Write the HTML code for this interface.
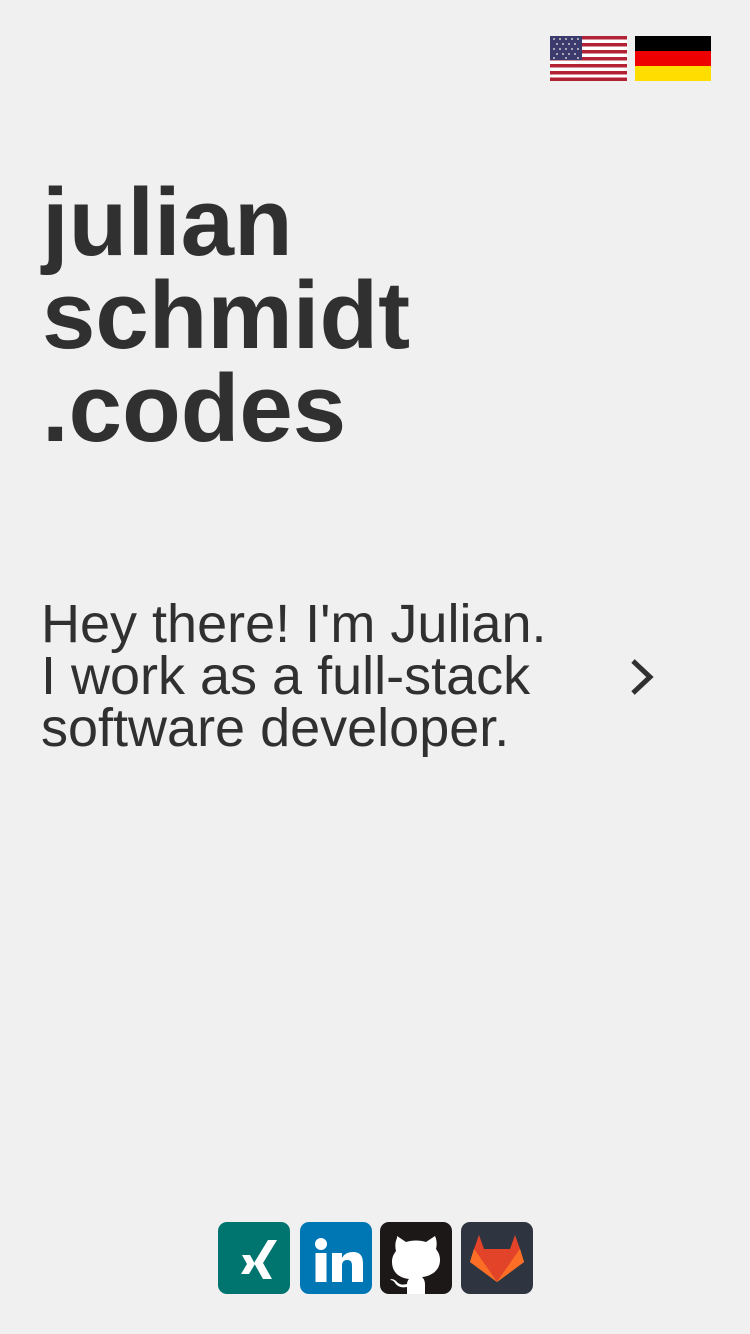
<!DOCTYPE html>
<html><head><meta charset="utf-8"><style>
body{margin:0;width:750px;height:1334px;background:#f0f0f0;position:relative;overflow:hidden;font-family:"Liberation Sans",sans-serif;color:#303030}
.t{position:absolute;left:42px;top:176px;font-weight:bold;font-size:96px;line-height:93px}
.b{position:absolute;left:41px;top:598px;font-size:54px;line-height:52px;white-space:nowrap}
.ic{position:absolute;top:1222px;width:72px;height:72px;border-radius:9px;overflow:hidden}
</style></head><body>
<svg style="position:absolute;left:550px;top:36px" width="77" height="45" viewBox="0 0 77 45">
<rect width="77" height="45" fill="#fff"/>
<g fill="#b22234"><rect y="0" width="77" height="3.5"/><rect y="7" width="77" height="3.5"/><rect y="14" width="77" height="3.5"/><rect y="21" width="77" height="3.5"/><rect y="28" width="77" height="3.5"/><rect y="35" width="77" height="3.5"/><rect y="41.5" width="77" height="3.5"/></g>
<rect width="32" height="24" fill="#3c3b6e"/>
<g fill="#ccc"><circle cx="4" cy="3" r="1"/><circle cx="10" cy="3" r="1"/><circle cx="16" cy="3" r="1"/><circle cx="22" cy="3" r="1"/><circle cx="28" cy="3" r="1"/><circle cx="7" cy="8" r="1"/><circle cx="13" cy="8" r="1"/><circle cx="19" cy="8" r="1"/><circle cx="25" cy="8" r="1"/><circle cx="4" cy="13" r="1"/><circle cx="10" cy="13" r="1"/><circle cx="16" cy="13" r="1"/><circle cx="22" cy="13" r="1"/><circle cx="28" cy="13" r="1"/><circle cx="7" cy="18" r="1"/><circle cx="13" cy="18" r="1"/><circle cx="19" cy="18" r="1"/><circle cx="25" cy="18" r="1"/><circle cx="4" cy="22" r="1"/><circle cx="16" cy="22" r="1"/><circle cx="28" cy="22" r="1"/></g>
</svg>
<svg style="position:absolute;left:635px;top:36px" width="76" height="45"><rect width="76" height="15" fill="#000"/><rect y="15" width="76" height="15" fill="#e00"/><rect y="30" width="76" height="15" fill="#fd0"/></svg>
<div class="t">julian<br>schmidt<br>.codes</div>
<div class="b">Hey there! I'm Julian.<br>I work as a full-stack<br>software developer.</div>
<svg style="position:absolute;left:626px;top:656px" width="32" height="42"><path d="M7 5 L24 21 L7 37" fill="none" stroke="#303030" stroke-width="5"/></svg>
<svg class="ic" style="left:218px" viewBox="0 0 72 72"><rect width="72" height="72" fill="#007570"/><path d="M24 33h8l5 9-6 10h-8l6-10z" fill="#fff"/><path d="M50 18h9L45 41l9 16h-9l-9-16z" fill="#fff"/></svg>
<svg class="ic" style="left:300px" viewBox="0 0 72 72"><rect width="72" height="72" fill="#0077b5"/><circle cx="21" cy="22" r="6" fill="#fff"/><rect x="15.5" y="31" width="11" height="29" fill="#fff"/><path d="M32 31h10v5c2-4 6-6 11-6 8 0 10 5 10 12v18H52V44c0-4-1-6-5-6s-5 3-5 6v16H32z" fill="#fff"/></svg>
<svg class="ic" style="left:380px" viewBox="0 0 72 72"><rect width="72" height="72" fill="#1b1817"/><path d="M17 14l9 6c6-2 14-2 20 0l9-6c2 4 2 9 1 13 3 4 4 7 4 11 0 10-8 16-18 17 2 2 3 4 3 8v9H27v-7c-5 1-9 0-12-4-1-2-3-3-5-3 2-2 5 0 7 2 3 3 6 3 10 2 0-2 1-4 2-5-10-1-17-7-17-17 0-4 1-7 4-11-1-4-1-9 1-13z" fill="#fff"/></svg>
<svg class="ic" style="left:461px" viewBox="0 0 72 72"><rect width="72" height="72" fill="#2e3440"/><path d="M36 60L9 40l4-13 10 0z" fill="#fca326"/><path d="M36 60L63 40l-4-13-10 0z" fill="#fca326"/><path d="M36 60L13 27 18 13l5 14z" fill="#e24329"/><path d="M36 60L59 27 54 13l-5 14z" fill="#e24329"/><path d="M36 60L23 27h26z" fill="#e24329"/><path d="M36 60L9 40l4-13z" fill="#fc6d26"/><path d="M36 60L63 40l-4-13z" fill="#fc6d26"/></svg>
</body></html>
